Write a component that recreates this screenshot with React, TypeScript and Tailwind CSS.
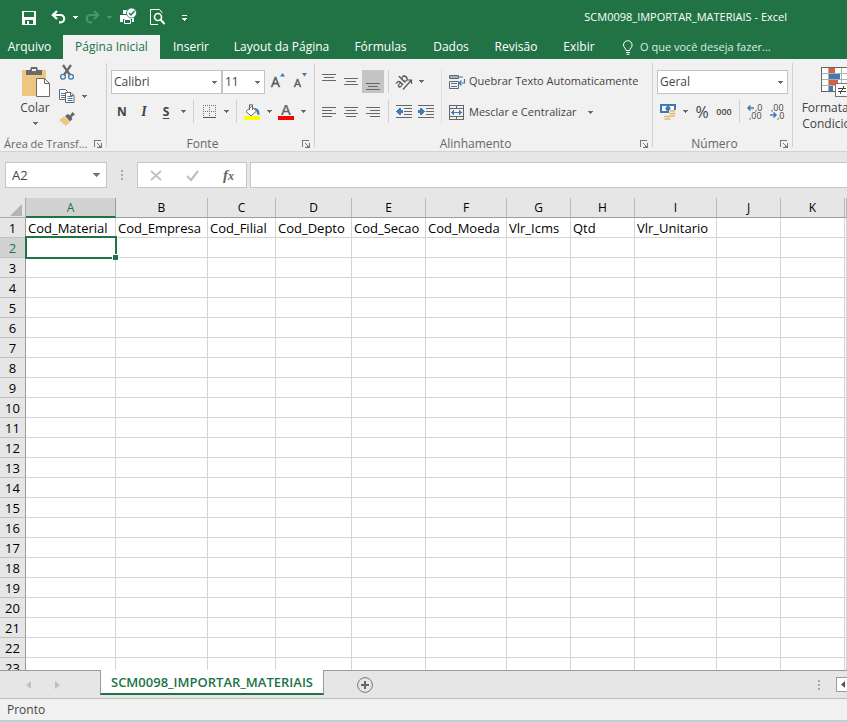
import type { ReactNode } from "react";
import clsx from "clsx";
import { twMerge } from "tailwind-merge";

const TABS = [
  { label: "Inserir", width: "w-[62px]" },
  { label: "Layout da Página", width: "w-[119px]" },
  { label: "Fórmulas", width: "w-[79px]" },
  { label: "Dados", width: "w-[62px]" },
  { label: "Revisão", width: "w-[68px]" },
  { label: "Exibir", width: "w-[58px]" },
];

const COLUMNS = [
  { id: "A", width: "w-[90px]", title: "Cod_Material" },
  { id: "B", width: "w-[92px]", title: "Cod_Empresa" },
  { id: "C", width: "w-[68px]", title: "Cod_Filial" },
  { id: "D", width: "w-[76px]", title: "Cod_Depto" },
  { id: "E", width: "w-[74px]", title: "Cod_Secao" },
  { id: "F", width: "w-[81px]", title: "Cod_Moeda" },
  { id: "G", width: "w-[64px]", title: "Vlr_Icms" },
  { id: "H", width: "w-[64px]", title: "Qtd" },
  { id: "I", width: "w-[82px]", title: "Vlr_Unitario" },
  { id: "J", width: "w-[64px]", title: "" },
  { id: "K", width: "w-[64px]", title: "" },
  { id: "", width: "w-auto", title: "" },
];

const ROWS = Array.from({ length: 23 }, (_, i) => i + 1);

interface IconProps {
  w: number;
  h: number;
  children: ReactNode;
  crisp?: boolean;
}

function Icon({ w, h, children, crisp }: IconProps) {
  return (
    <svg
      width={w}
      height={h}
      viewBox={`0 0 ${w} ${h}`}
      fill="none"
      shapeRendering={crisp ? "crispEdges" : "auto"}
      className="shrink-0 overflow-visible"
      aria-hidden="true"
    >
      {children}
    </svg>
  );
}

function CaretIcon({ color = "#6b6b6b" }: { color?: string }) {
  return (
    <Icon w={5} h={3} crisp>
      <path d="M0 0h5v1H0zM1 1h3v1H1zM2 2h1v1H2z" fill={color} />
    </Icon>
  );
}

function Caret({ label, color }: { label: string; color?: string }) {
  return (
    <button type="button" aria-label={label} className="flex h-[23px] w-3 shrink-0 items-center justify-center">
      <CaretIcon color={color} />
    </button>
  );
}

interface ToolProps {
  label: string;
  children: ReactNode;
  className?: string;
}

function Tool({ label, children, className }: ToolProps) {
  return (
    <button
      type="button"
      aria-label={label}
      title={label}
      className={twMerge("flex h-[23px] w-[22px] shrink-0 items-center justify-center text-[#444444]", className)}
    >
      {children}
    </button>
  );
}

function Divider() {
  return <span className="mx-1 h-[23px] w-px shrink-0 bg-[#d0d0d0]" />;
}

function Launcher({ label }: { label: string }) {
  return (
    <button type="button" aria-label={label} className="flex w-4 shrink-0 justify-center">
      <Icon w={8} h={8} crisp>
        <path d="M0 0h7v1H1v6H0zM3 3h1v1H3zM4 4h1v1H4zM5 5h1v1H5zM7 3h1v5H3V7h2V6h2z" fill="#777777" />
      </Icon>
    </button>
  );
}

interface GroupProps {
  title: string;
  width: string;
  children: ReactNode;
}

// One titled block of the ribbon, with its dialog launcher in the corner
function Group({ title, width, children }: GroupProps) {
  return (
    <section className={clsx("my-1 shrink-0 border-r border-[#d0d0d0] pt-[7px]", width)} aria-label={title}>
      <div className="h-[54px]">{children}</div>
      <div className="mt-3 flex h-4 items-center">
        <span className="min-w-0 flex-1 text-center text-[#666666]">{title}</span>
        <Launcher label={`Opções de ${title}`} />
      </div>
    </section>
  );
}

interface ComboProps {
  label: string;
  value: string;
  className: string;
}

function Combo({ label, value, className }: ComboProps) {
  return (
    <label className={clsx("relative flex h-6 shrink-0 items-center border border-[#c3c3c3] bg-white", className)}>
      <select aria-label={label} defaultValue={value} className="h-full w-full appearance-none pl-[2px] text-[#444444] outline-none">
        <option>{value}</option>
      </select>
      <span className="pointer-events-none absolute right-1">
        <CaretIcon />
      </span>
    </label>
  );
}

function Lines({ rows }: { rows: [number, number, number][] }) {
  return (
    <Icon w={14} h={14} crisp>
      {rows.map(([x, y, w]) => (
        <rect key={y} x={x} y={y} width={w} height={1} fill="#666666" />
      ))}
    </Icon>
  );
}

function TitleBar() {
  return (
    <header className="flex h-[35px] shrink-0 items-center bg-[#217346] pl-[18px] text-white">
      <Tool label="Salvar">
        <Icon w={14} h={14} crisp>
          <path d="M0 0h14v14H0zM2 1v5h10V1zM3 9v4h2v-3h2v3h4V9z" fill="#fff" fillRule="evenodd" />
        </Icon>
      </Tool>
      <Tool label="Desfazer" className="ml-[7px]">
        <Icon w={15} h={14}>
          <path d="M6 0 1.800 4 6 8M2 4h7.500a3.700 3.700 0 0 1 0 7.400H8" stroke="#fff" strokeWidth="2.200" />
        </Icon>
      </Tool>
      <Caret label="Lista de desfazer" color="#fff" />
      <Tool label="Refazer">
        <Icon w={15} h={14}>
          <path d="M9 0 13.200 4 9 8M13 4H5.500a3.700 3.700 0 0 0 0 7.400H7" stroke="#4f9270" strokeWidth="2.200" />
        </Icon>
      </Tool>
      <Caret label="Lista de refazer" color="#4f9270" />
      <Tool label="Impressão rápida" className="ml-[2px]">
        <Icon w={17} h={17}>
          <path d="M3 1h5v4H3zM0 6h14v7h-2v-3H3v3H0z" fill="#fff" />
          <path d="M4.500 10.500h6v4h-6z" stroke="#fff" />
          <circle cx="11.500" cy="4" r="5" fill="#fff" stroke="#217346" strokeWidth=".8" />
          <path d="m9 4 2 2 3.500-4" stroke="#217346" strokeWidth="1.400" />
        </Icon>
      </Tool>
      <Tool label="Visualizar impressão" className="ml-[7px]">
        <Icon w={15} h={18}>
          <path d="M12 4V3.500L9.500.500h-9v15H8" stroke="#fff" />
          <circle cx="8" cy="8" r="3.500" stroke="#fff" strokeWidth="1.600" />
          <path d="m10.500 10.500 4 4.500" stroke="#fff" strokeWidth="2" />
        </Icon>
      </Tool>
      <Tool label="Personalizar barra" className="ml-[5px]">
        <Icon w={5} h={6} crisp>
          <path d="M0 0h5v1H0zM0 3h5v1H0zM1 4h3v1H1zM2 5h1v1H2z" fill="#fff" />
        </Icon>
      </Tool>
      <h1 className="ml-auto pr-[60px] text-[11px] whitespace-nowrap">SCM0098_IMPORTAR_MATERIAIS - Excel</h1>
    </header>
  );
}

function RibbonTabs() {
  return (
    <nav className="flex h-6 shrink-0 items-stretch bg-[#217346] whitespace-nowrap text-white">
      <button type="button" className="w-[63px] pr-1">Arquivo</button>
      <button type="button" className="w-[97px] bg-[#f1f1f1] text-[#217346]">Página Inicial</button>
      {TABS.map((tab) => (
        <button key={tab.label} type="button" className={tab.width}>
          {tab.label}
        </button>
      ))}
      <button type="button" className="ml-[14px] flex items-center gap-[6px] text-[11px] text-[#dcebe3]">
        <Icon w={12} h={15}>
          <path
            d="M4 10.500C4 8.500 1.500 7.500 1.500 5a4.300 4.300 0 0 1 8.600 0c0 2.500-2.500 3.500-2.500 5.500zM4 12.500h4M4.500 14.300h3"
            stroke="#fff"
          />
        </Icon>
        O que você deseja fazer...
      </button>
    </nav>
  );
}

function ClipboardGroup() {
  return (
    <section className="my-1 w-[107px] shrink-0 border-r border-[#d0d0d0]" aria-label="Área de Transferência">
      <div className="flex h-[73px] pl-3">
        <button type="button" className="flex w-11 flex-col items-center pt-1 pl-[2px] text-[#444444]">
          <Icon w={29} h={30}>
            <path d="M1 3h24v26H1z" fill="#edc681" />
            <path d="M5 3h4l1-3h6l1 3h4v5H5z" fill="#6a6a6a" />
            <path d="M11 2h4v2h-4z" fill="#f1f1f1" />
            <path d="M15.500 11.500h8l5 5v13h-13z" fill="#fff" stroke="#6a6a6a" />
            <path d="M23.500 11.500v5h5" stroke="#6a6a6a" />
          </Icon>
          <span className="mt-[3px] leading-4">Colar</span>
          <span className="mt-[6px]">
            <CaretIcon />
          </span>
        </button>
        <div className="flex flex-col">
          <Tool label="Recortar" className="h-[22px] pb-1">
            <Icon w={16} h={15}>
              <path d="M4 0 11 10M12 0 5 10" stroke="#666666" strokeWidth="2.200" />
              <circle cx="4" cy="11.800" r="2.400" stroke="#3f7ab5" strokeWidth="1.300" />
              <circle cx="12" cy="11.800" r="2.400" stroke="#3f7ab5" strokeWidth="1.300" />
            </Icon>
          </Tool>
          <div className="flex h-[22px] items-center">
            <Tool label="Copiar">
              <Icon w={16} h={14}>
                <path d="M.5.500h6l2 2v8h-8z" fill="#fff" stroke="#666666" />
                <path d="M2 4.500h4M2 6.500h4M2 8.500h4" stroke="#3f7ab5" />
                <path d="M6.500 3.500h5.500l3 3v7H6.500z" fill="#fff" stroke="#666666" />
                <path d="M8.500 7.500h5M8.500 9.500h5M8.500 11.500h5" stroke="#3f7ab5" />
                <path d="M11.500 3.500v3h3" stroke="#666666" />
              </Icon>
            </Tool>
            <Caret label="Opções de copiar" />
          </div>
          <Tool label="Pincel de formatação" className="h-[22px]">
            <Icon w={16} h={15}>
              <path d="m0 9 5-3.500 6 5.500-4 4z" fill="#edc681" />
              <path d="m6 5 3-2 2 1.500L13.500 1 16 3.500 12.500 6l1 2-2.500 2.500z" fill="#666666" />
            </Icon>
          </Tool>
        </div>
      </div>
      <div className="flex h-4 items-center">
        <span className="min-w-0 flex-1 pl-1 text-[11px] whitespace-nowrap text-[#666666]">Área de Transf...</span>
        <Launcher label="Opções da área de transferência" />
      </div>
    </section>
  );
}

function FontGroup() {
  return (
    <Group title="Fonte" width="w-[208px]">
      <div className="flex pl-1">
        <Combo label="Fonte" value="Calibri" className="w-[111px]" />
        <Combo label="Tamanho da fonte" value="11" className="w-[43px]" />
        <Tool label="Aumentar fonte" className="ml-[2px]">
          <Icon w={14} h={17}>
            <text x="0" y="14" fontSize="14" fill="#555555" stroke="#555555" strokeWidth=".4">A</text>
            <path d="M9 3.500 11.500 0 14 3.500z" fill="#3f7ab5" />
          </Icon>
        </Tool>
        <Tool label="Diminuir fonte">
          <Icon w={14} h={17}>
            <text x="1" y="14" fontSize="11" fill="#555555" stroke="#555555" strokeWidth=".4">A</text>
            <path d="M9 0l2.500 3.500L14 0z" fill="#3f7ab5" />
          </Icon>
        </Tool>
      </div>
      <div className="mt-[6px] flex pl-1">
        <Tool label="Negrito" className="font-bold">N</Tool>
        <Tool label="Itálico" className="font-['Liberation_Serif',serif] text-[14px] font-bold italic">I</Tool>
        <Tool label="Sublinhado" className="font-bold underline underline-offset-2">S</Tool>
        <Caret label="Opções de sublinhado" />
        <Divider />
        <Tool label="Bordas">
          <Icon w={13} h={13} crisp>
            <path d="M.5 0v12M6.500 0v12M12.500 0v12M0 .500h13M0 6.500h13" stroke="#777777" strokeDasharray="1 1" />
            <path d="M0 12.500h13" stroke="#555555" />
          </Icon>
        </Tool>
        <Caret label="Opções de bordas" />
        <Divider />
        <Tool label="Cor de preenchimento">
          <Icon w={16} h={16}>
            <path d="M10 4c4 0 5.500 2 5.500 7-2 0-2.500-1-3-4z" fill="#3f7ab5" />
            <path d="m2 7.500 5.500-5 5 4.500-5.500 5z" fill="#fff" stroke="#666666" />
            <path d="M5.500 6V.8h3V6" stroke="#666666" />
            <path d="M0 12h16v4H0z" fill="#ffff00" />
          </Icon>
        </Tool>
        <Caret label="Opções de preenchimento" />
        <Tool label="Cor da fonte">
          <Icon w={16} h={16}>
            <text x="3" y="11" fontSize="15" fontWeight="600" fill="#666666">A</text>
            <path d="M0 12h16v4H0z" fill="#ff0000" />
          </Icon>
        </Tool>
        <Caret label="Opções de cor da fonte" />
      </div>
    </Group>
  );
}

function AlignmentGroup() {
  return (
    <Group title="Alinhamento" width="w-[338px]">
      <div className="flex">
        <div>
          <div className="flex pl-[3px]">
            <Tool label="Alinhar em cima"><Lines rows={[[0, -1, 14], [2, 2, 10], [0, 5, 14]]} /></Tool>
            <Tool label="Alinhar no meio"><Lines rows={[[0, 3, 14], [2, 6, 10], [0, 9, 14]]} /></Tool>
            <Tool label="Alinhar embaixo" className="bg-[#c5c5c5]"><Lines rows={[[0, 8, 14], [2, 11, 10], [0, 14, 14]]} /></Tool>
            <Divider />
            <Tool label="Orientação">
              <Icon w={17} h={16}>
                <text x="0" y="11" fontSize="12" fontWeight="600" fill="#555555" transform="rotate(-45 6 9)">ab</text>
                <path d="M7 15.500 15 6.500M11.500 6H15.500V10" stroke="#555555" strokeWidth="1.200" />
              </Icon>
            </Tool>
            <Caret label="Opções de orientação" />
          </div>
          <div className="mt-[7px] flex pl-[3px]">
            <Tool label="Alinhar à esquerda"><Lines rows={[[0, 2, 14], [0, 5, 10], [0, 8, 14], [0, 11, 10]]} /></Tool>
            <Tool label="Centralizar"><Lines rows={[[0, 2, 14], [2, 5, 10], [0, 8, 14], [2, 11, 10]]} /></Tool>
            <Tool label="Alinhar à direita"><Lines rows={[[0, 2, 14], [4, 5, 10], [0, 8, 14], [4, 11, 10]]} /></Tool>
            <Divider />
            <Tool label="Diminuir recuo">
              <Icon w={16} h={13} crisp>
                <path d="M0 .500h16M8 3.500h8M8 6.500h8M8 9.500h8M0 12.500h16" stroke="#666666" />
                <path d="M0 6h1V5h1V4h1V3h2v2h2v3H5v2H3V9H2V8H1V7H0z" fill="#3f7ab5" />
              </Icon>
            </Tool>
            <Tool label="Aumentar recuo">
              <Icon w={16} h={13} crisp>
                <path d="M0 .500h16M8 3.500h8M8 6.500h8M8 9.500h8M0 12.500h16" stroke="#666666" />
                <path d="M7 6H6V5H5V4H4V3H2v2H0v3h2v2h2V9h1V8h1V7h1z" fill="#3f7ab5" />
              </Icon>
            </Tool>
          </div>
        </div>
        <span className="ml-1 h-[54px] w-px bg-[#dedede]" />
        <div className="flex flex-col gap-2 pl-[7px] text-[11px] whitespace-nowrap text-[#444444]">
          <button type="button" className="flex h-[23px] items-center gap-1">
            <Icon w={16} h={16}>
              <path d="M.5 1.500h9v3h-9zM.5 7.500h9v7h-9z" stroke="#666666" />
              <path d="M0 3h14M2 9.500h6M2 12.500h6" stroke="#3f7ab5" />
              <path d="M15.500 5v4h-5M12.500 6.500 10 9l2.500 2.500" stroke="#3f7ab5" strokeWidth="1.200" />
            </Icon>
            Quebrar Texto Automaticamente
          </button>
          <div className="flex items-center">
            <button type="button" className="flex h-[23px] items-center gap-1">
              <Icon w={16} h={15} crisp>
                <path d="M.5.500h14v14H.5zM0 3.500h15M0 11.500h15M7.500 0v4M7.500 11v4" stroke="#666666" />
                <path d="M2 7h11v1H2zM3 6h1v3H3zM4 5h1v5H4zM11 6h1v3h-1zM10 5h1v5h-1z" fill="#3f7ab5" />
              </Icon>
              Mesclar e Centralizar
            </button>
            <span className="ml-2 flex">
              <Caret label="Opções de mesclagem" />
            </span>
          </div>
        </div>
      </div>
    </Group>
  );
}

function NumberGroup() {
  return (
    <Group title="Número" width="w-[140px]">
      <div className="pl-1">
        <Combo label="Formato de número" value="Geral" className="w-[131px]" />
      </div>
      <div className="mt-[6px] flex pl-1">
        <Tool label="Formato de contabilização">
          <Icon w={17} h={16}>
            <path d="M0 0h16v9H0z" fill="#3f7ab5" />
            <path d="M2 2h12v5H2z" fill="#fff" />
            <circle cx="8" cy="4.500" r="2.500" fill="#3f7ab5" />
            <path d="M9 6h7v9h-5v1H4v-4h5z" fill="#f1f1f1" />
            <path d="M10 7h5M9.500 9.500h6M9.500 12h5.500M4 12.500h6M4.500 15h6" stroke="#e3b568" strokeWidth="1.700" />
          </Icon>
        </Tool>
        <Caret label="Opções de contabilização" />
        <Tool label="Porcentagem" className="text-[16px]">%</Tool>
        <Tool label="Separador de milhares" className="text-[9px] font-semibold">000</Tool>
        <Divider />
        <Tool label="Aumentar casas decimais">
          <Icon w={16} h={16}>
            <text x="8" y="7" fontSize="9" fill="#444444">,0</text>
            <text x="2" y="15" fontSize="9" fill="#444444">,00</text>
            <path d="M1 4h6M3.500 1.500 1 4l2.500 2.500" stroke="#3f7ab5" strokeWidth="1.500" />
          </Icon>
        </Tool>
        <Tool label="Diminuir casas decimais">
          <Icon w={16} h={16}>
            <text x="2" y="7" fontSize="9" fill="#444444">,00</text>
            <text x="8" y="15" fontSize="9" fill="#444444">,0</text>
            <path d="M1 11h6M4.500 8.500 7 11l-2.500 2.500" stroke="#3f7ab5" strokeWidth="1.500" />
          </Icon>
        </Tool>
      </div>
    </Group>
  );
}

function StylesGroup() {
  return (
    <section className="shrink-0 pl-1" aria-label="Estilo">
      <button type="button" className="flex w-[76px] flex-col items-center pt-2 leading-4 text-[#444444]">
        <Icon w={28} h={30} crisp>
          <path d="M.5.500h27v24H.5z" fill="#fff" />
          <path d="M8 1h6v5H8zM8 13h9v5H8z" fill="#d9603f" />
          <path d="M8 7h11v5H8zM8 19h4v5H8z" fill="#3f7ab5" />
          <path d="M0 6.500h28M0 12.500h28M0 18.500h28M7.500 0v25M20.500 0v25" stroke="#b0b0b0" />
          <path d="M.5.500h27v24H.5z" stroke="#666666" />
          <path d="M14.500 16.500h13v13h-13z" fill="#fff" stroke="#777777" />
          <path d="M17 21.500h8M17 24.500h8M23 19l-4 8" stroke="#444444" />
        </Icon>
        <span className="mt-[3px]">Formatação Condicional</span>
      </button>
    </section>
  );
}

function FormulaBar() {
  return (
    <div className="flex h-[46px] shrink-0 items-start bg-[#e6e6e6] pt-[10px] pl-[5px]">
      <label className="relative flex h-[26px] w-[102px] shrink-0 items-center border border-[#c6c6c6] bg-white">
        <input
          aria-label="Caixa de nome"
          defaultValue="A2"
          className="h-full w-full pl-[6px] text-[13px] text-[#444444] outline-none"
        />
        <span className="pointer-events-none absolute right-[6px]">
          <Icon w={7} h={4} crisp>
            <path d="M0 0h7v1H0zM1 1h5v1H1zM2 2h3v1H2zM3 3h1v1H3z" fill="#777777" />
          </Icon>
        </span>
      </label>
      <span className="flex h-[26px] w-[30px] shrink-0 items-center justify-center">
        <Icon w={2} h={10} crisp>
          <path d="M0 0h2v2H0zM0 4h2v2H0zM0 8h2v2H0z" fill="#aaaaaa" />
        </Icon>
      </span>
      <div className="flex h-[26px] w-[110px] shrink-0 items-center justify-around border border-[#c6c6c6] bg-white">
        <button type="button" aria-label="Cancelar">
          <Icon w={12} h={11}>
            <path d="m1 1 10 9M11 1 1 10" stroke="#c0c0c0" strokeWidth="1.800" />
          </Icon>
        </button>
        <button type="button" aria-label="Inserir">
          <Icon w={13} h={11}>
            <path d="m1 6 4 4 7-9" stroke="#c0c0c0" strokeWidth="2.200" />
          </Icon>
        </button>
        <button
          type="button"
          aria-label="Inserir função"
          className="font-['Liberation_Serif',serif] text-[15px] leading-4 font-bold text-[#666666] italic"
        >
          f<span className="text-[12px]">x</span>
        </button>
      </div>
      <input
        aria-label="Barra de fórmulas"
        className="ml-[3px] h-[26px] min-w-0 flex-1 border border-r-0 border-[#c6c6c6] bg-white px-2 outline-none"
      />
    </div>
  );
}

function Sheet() {
  return (
    <main className="min-h-0 flex-1 overflow-hidden bg-white">
      <table className="w-full table-fixed border-separate border-spacing-0 text-[13px] leading-4 text-black">
        <colgroup>
          <col className="w-[26px]" />
          {COLUMNS.map((col) => (
            <col key={col.id} className={col.width} />
          ))}
        </colgroup>
        <thead>
          <tr className="h-5 bg-[#e6e6e6] text-[12px]">
            <th aria-label="Selecionar tudo" className="border-r border-b border-[#ababab] p-0">
              <span className="flex justify-end pt-1 pr-[3px]">
                <Icon w={12} h={12}>
                  <path d="M12 0v12H0z" fill="#b4b4b4" />
                </Icon>
              </span>
            </th>
            {COLUMNS.map((col) => (
              <th
                key={col.id}
                scope="col"
                className={clsx(
                  "border-r p-0 font-normal",
                  col.id === "A"
                    ? "border-b-2 border-r-[#9b9b9b] border-b-[#217346] bg-[#d2d2d2] pt-px text-[#217346]"
                    : "border-b border-r-[#b9b9b9] border-b-[#9b9b9b]",
                )}
              >
                {col.id}
              </th>
            ))}
          </tr>
        </thead>
        <tbody>
          {ROWS.map((row) => (
            <tr key={row} className="h-5">
              <th
                scope="row"
                className={clsx(
                  "border-r border-b border-r-[#9b9b9b] border-b-[#c0c0c0] p-0 pt-px font-normal",
                  row === 2 ? "bg-[#d2d2d2] text-[#217346]" : "bg-[#e6e6e6]",
                )}
              >
                {row}
              </th>
              {COLUMNS.map((col) => {
                const selected = row === 2 && col.id === "A";
                return (
                  <td
                    key={col.id}
                    className={clsx("border-r border-b border-[#d4d4d4] p-0 pl-[2px] whitespace-nowrap", selected && "relative")}
                  >
                    {row === 1 && col.title}
                    {selected && (
                      <span className="absolute -top-[2px] -right-[2px] -bottom-[2px] -left-px border-2 border-[#217346]">
                        <span className="absolute -right-[3px] -bottom-[3px] h-[6px] w-[6px] border-t border-l border-white bg-[#217346]" />
                      </span>
                    )}
                  </td>
                );
              })}
            </tr>
          ))}
        </tbody>
      </table>
    </main>
  );
}

function SheetTabs() {
  return (
    <div className="flex h-7 shrink-0 bg-[#e6e6e6]">
      <div className="flex w-[100px] shrink-0 items-center gap-6 border-t border-[#9b9b9b] pl-[26px]">
        <button type="button" aria-label="Planilha anterior">
          <Icon w={5} h={8}><path d="M5 0v8L0 4z" fill="#c0c0c0" /></Icon>
        </button>
        <button type="button" aria-label="Próxima planilha">
          <Icon w={5} h={8}><path d="M0 0v8l5-4z" fill="#c0c0c0" /></Icon>
        </button>
      </div>
      <button
        type="button"
        className="h-[25px] w-[224px] shrink-0 border-x border-b-2 border-x-[#9b9b9b] border-b-[#217346] bg-white pt-[2px] text-[13px] font-semibold text-[#217346]"
      >
        SCM0098_IMPORTAR_MATERIAIS
      </button>
      <div className="flex flex-1 items-center border-t border-[#9b9b9b] pl-[33px]">
        <button type="button" aria-label="Nova planilha">
          <Icon w={16} h={16}>
            <circle cx="8" cy="8" r="7.400" stroke="#777777" />
            <path d="M8 4v8M4 8h8" stroke="#666666" strokeWidth="2" />
          </Icon>
        </button>
        <span className="ml-auto">
          <Icon w={2} h={10} crisp>
            <path d="M0 0h2v2H0zM0 4h2v2H0zM0 8h2v2H0z" fill="#aaaaaa" />
          </Icon>
        </span>
        <button
          type="button"
          aria-label="Rolar para a esquerda"
          className="ml-4 flex h-[15px] w-[11px] items-center justify-end border border-r-0 border-[#9b9b9b] bg-white pr-[2px]"
        >
          <Icon w={4} h={7}><path d="M4 0v7L0 3.500z" fill="#555555" /></Icon>
        </button>
      </div>
    </div>
  );
}

export default function App() {
  return (
    <div className="flex h-screen flex-col overflow-hidden bg-[#e6e6e6] font-['Open_Sans','Noto_Sans',sans-serif] text-[12px]">
      <TitleBar />
      <RibbonTabs />
      <div className="flex h-[93px] shrink-0 overflow-hidden border-b border-[#d2d2d2] bg-[#f1f1f1]">
        <ClipboardGroup />
        <FontGroup />
        <AlignmentGroup />
        <NumberGroup />
        <StylesGroup />
      </div>
      <FormulaBar />
      <Sheet />
      <SheetTabs />
      <footer className="flex h-6 shrink-0 items-center border-t border-b-2 border-t-[#bdbdbd] border-b-[#b5d3dc] bg-[#f1f1f1] pl-[7px] text-[#444444]">
        Pronto
      </footer>
    </div>
  );
}
